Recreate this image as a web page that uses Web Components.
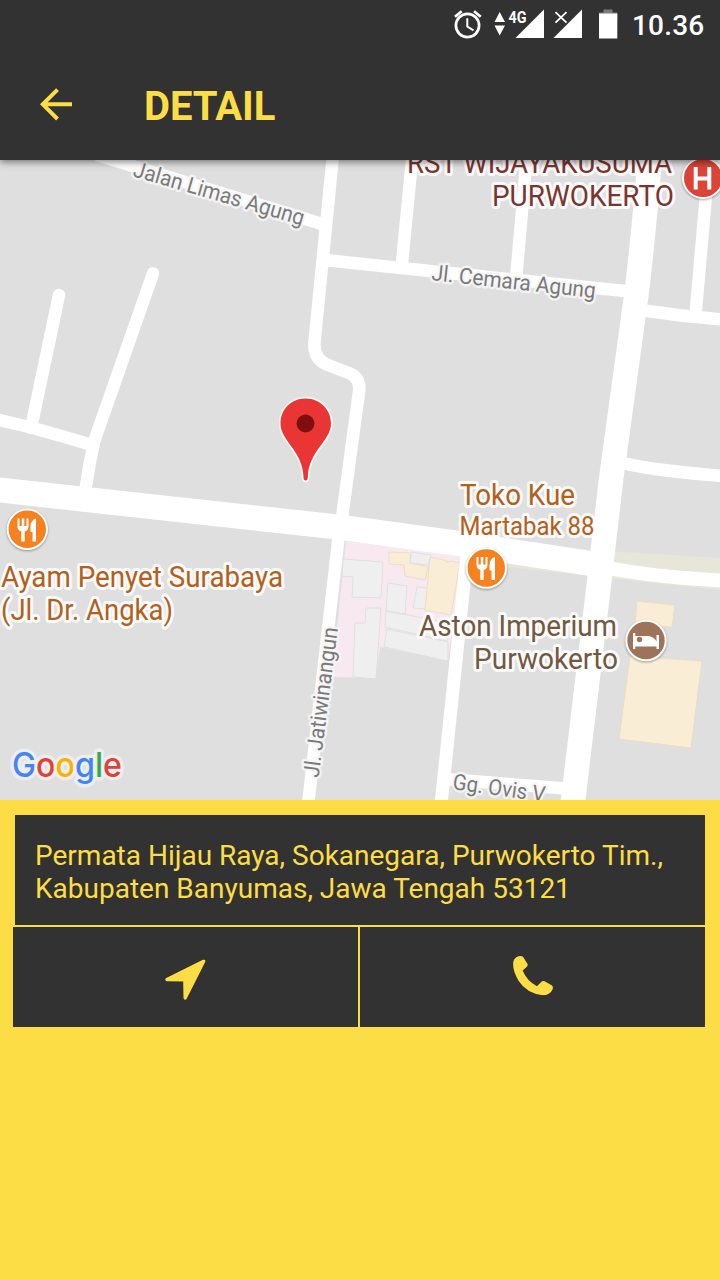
<!DOCTYPE html>
<html lang="id">
<head>
<meta charset="utf-8">
<title>Detail</title>
<style>
  html, body { margin: 0; height: 100%; background: #fddd46; font-family: Roboto, "Noto Sans", sans-serif; }
</style>
</head>
<body>
<detail-screen></detail-screen>

<template id="t-screen">
  <style>
    :host { display: flex; flex-direction: column; width: 720px; height: 1280px; overflow: hidden; background: #fddd46; }
    header { background: #323232; box-shadow: 0 2px 7px rgba(0,0,0,.5); position: relative; z-index: 1; }
    .panel { display: flex; flex-direction: column; gap: 2px; padding: 15px 15px 0 13px; }
    .actions { display: grid; grid-template-columns: 1fr 1fr; gap: 2px; height: 100px; }
  </style>
  <header>
    <status-bar>10.36</status-bar>
    <app-bar>DETAIL</app-bar>
  </header>
  <map-view></map-view>
  <section class="panel">
    <address-card>Permata Hijau Raya, Sokanegara, Purwokerto Tim., Kabupaten Banyumas, Jawa Tengah 53121</address-card>
    <div class="actions">
      <action-button label="Navigasi" style="--shift:4px">
        <svg width="41" height="41" viewBox="496 506 123 123"><path d="M612 513L502 567.500L555.500 568.500L556.500 623Z" fill="#fddd46" stroke="#fddd46" stroke-width="10" stroke-linejoin="round"/></svg>
      </action-button>
      <action-button label="Telepon" style="--shift:-3px">
        <svg width="41" height="40" viewBox="456 496 123 120"><path d="M469 501Q480 495 489 500L503 522Q504 527 498 532L488 541Q500 572 531 588L545 574Q549 571 554 573L576 586Q580 590 578 597Q570 615 548 615Q500 610 475 571Q456 538 460 514Q462 505 469 501Z" fill="#fddd46"/></svg>
      </action-button>
    </div>
  </section>
</template>

<template id="t-status">
  <style>
    :host { display: flex; height: 48px; justify-content: flex-end; align-items: center; padding-right: 16px; box-sizing: border-box; }
    svg { flex: none; }
    .time { width: 72px; color: #fff; font-weight: 500; font-size: 28px; line-height: 48px; letter-spacing: .2px; margin-left: 12px; white-space: nowrap; padding-top: 3px; }
  </style>
  <svg width="180" height="48" viewBox="440 0 180 48" fill="#fff">
    <g fill="none" stroke="#fff">
      <circle cx="467.5" cy="25.5" r="11.6" stroke-width="2.7"/>
      <path d="M467.3 18.3V26.5L473.5 30.3" stroke-width="2"/>
      <path d="M455 16.8L461.7 11.2M480.7 16.8L474 11.2" stroke-width="2.8"/>
    </g>
    <path d="M494.5 22L499.7 12L505 22ZM494.5 25.5H505L499.7 35.5Z"/>
    <text x="508.5" y="22.5" font-size="16.5" font-weight="700" textLength="18" lengthAdjust="spacingAndGlyphs">4G</text>
    <path d="M515.5 38L544 9.500V38ZM553.500 38L582 9.500V38Z"/>
    <path d="M555.500 12.200L566.500 22.700M566.500 12.200L555.500 22.700" stroke="#fff" stroke-width="1.800"/>
    <path d="M603.500 9.500H612.500V12.500H617.300V20H599V12.500H603.500Z" fill="#7c7c7c"/>
    <path d="M599 13.500H617.300V38.500H599Z"/>
  </svg>
  <span class="time"><slot></slot></span>
</template>

<template id="t-appbar">
  <style>
    :host { display: flex; height: 112px; align-items: center; padding-left: 40px; box-sizing: border-box; color: #fddd46; }
    h1 { margin: 4px 0 0 71px; padding-top: 1px; font-size: 40px; line-height: 48px; font-weight: 700; letter-spacing: -.1px; }
  </style>
  <svg width="33" height="33" viewBox="0 0 33 33" fill="none" stroke="#fddd46" stroke-width="4"><path d="M32 16.300H3M17.500 1.600L2.800 16.300L17.500 31"/></svg>
  <h1><slot></slot></h1>
</template>

<template id="t-address">
  <style>
    :host { display: block; box-sizing: border-box; height: 110px; margin-left: 2px; padding: 24px 20px; background: #323232; color: #fddd46; font-size: 28px; line-height: 33px; }
    p { margin: 0; }
  </style>
  <p><slot></slot></p>
</template>

<template id="t-action">
  <style>
    :host { display: flex; background: #323232; }
    button { all: unset; flex: 1; display: flex; align-items: center; justify-content: center; }
    ::slotted(svg) { display: block; transform: translateY(calc(var(--shift, 0px) / 2)); }
  </style>
  <button><slot></slot></button>
</template>

<template id="t-map">
  <style>
    :host { display: block; height: 640px; overflow: hidden; background: #dfdfdf; }
    svg { display: block; }
    .roads { fill: none; stroke: #fff; stroke-width: 12.500; }
    text { font-family: Roboto, sans-serif; paint-order: stroke; stroke-linejoin: round; stroke: #fff; stroke-opacity: .85; }
    .street { font-size: 22px; fill: #7a7a7a; stroke-width: 5px; stroke: #f6f6f6; }
    .poi { font-size: 29px; stroke-width: 6px; }
    .food { fill: #b3601a; stroke: #fdf1e4; }
    .hotel { fill: #735840; stroke: #f8f0e8; }
    .hospital { fill: #7b3530; stroke: #f8ecea; }
    .logo { font-family: Inter, sans-serif; font-size: 34.500px; font-weight: 500; stroke: #f0f0f0; stroke-width: 7px; }
    .grey { fill: #efefef; stroke: #dcdcdc; }
    .sand { fill: #f9edd6; stroke: #eadabd; }
    .badge { stroke: #fff; stroke-width: 2; filter: drop-shadow(0 1px 1px rgba(0,0,0,.35)); }
  </style>
  <svg width="720" height="640" viewBox="0 160 720 640">
    <defs>
      <g id="cutlery" fill="#fff">
        <path d="M-9.500 -10.500V-3Q-9.500 1.500 -5.700 2.500V12.500H-2.300V2.500Q1.500 1.500 1.500 -3V-10.500H-.5V-3H-2.700V-10.500H-5.200V-3H-7.500V-10.500Z"/>
        <path d="M9 -10.500Q3.500 -9 3.500 -2V3H5.500V12.500H9Z"/>
      </g>
    </defs>
    <path d="M500 538L592 550L720 558V590L600 577L500 566Z" fill="#e8e5d9"/>
    <path d="M346 541L462 556L448 661L380 647L376 678L332 677Z" fill="#f8e9f0"/>
    <g class="grey" stroke-width=".8">
      <path d="M343 559L383 562L381 598L352 597L353 577L342 576Z"/>
      <path d="M366 608L381 608L376 679L353 677L355 623L365 623Z"/>
      <path d="M388 583L407 586L405 614L386 611Z"/>
      <path d="M386 611L450 623L447 641L385 627Z"/>
      <path d="M387 629L448 642L448 661L384 647Z"/>
      <path d="M417 587L428 588L426 609L413 608Z"/>
    </g>
    <g class="sand" stroke-width=".8">
      <path d="M389 552L410 553L411 563L428 567L425 580L405 576L404 565L389 564Z"/>
      <path d="M430 557L444 560L447 562L451 561L460 563L451 615L425 610Z"/>
      <path d="M637 601L675 605L672 627L635 625Z"/>
      <path d="M630 656L702 661L691 748L619 739Z"/>
    </g>
    <path class="grey" stroke-width=".8" d="M411 552L431 555L428 565L410 563Z"/>
    <g class="roads">
      <path d="M97 155L322 224"/>
      <path d="M333 155L314.500 342Q313 359 328 365L350 373.500Q361 378.500 359 392L341 525"/>
      <path d="M340 525L308 805"/>
      <path d="M325 260L401 268L630 291.500M640 310Q680 316 722 319.500"/>
      <path d="M412.500 155L401.500 268M527 155L516 279M709.500 155L695.500 315"/>
      <path d="M620 462Q640 469 722 476"/>
      <path d="M59 295L31 428M153 273.500L96 436Q92 447 85 492" stroke-linecap="round"/>
      <path d="M-5 419L31 427.500Q62 436 92 445"/>
      <path d="M467.500 550L441 805" stroke-width="13"/>
      <path d="M445 779L572 789"/>
      <path d="M-5 489.500L342 527.500L470 545L600 565" stroke-width="25"/>
      <path d="M595 565Q640 576 722 580.500" stroke-width="14"/>
      <path d="M650 155Q646 210 637 290L611 480L600 575L572.500 805" stroke-width="24.500"/>
    </g>
    <text class="street" transform="translate(132 176) rotate(16.200)" textLength="177" lengthAdjust="spacingAndGlyphs">Jalan Limas Agung</text>
    <text class="street" transform="translate(431 280) rotate(6.300)" textLength="165" lengthAdjust="spacingAndGlyphs">Jl. Cemara Agung</text>
    <text class="street" transform="translate(318.500 778) rotate(-82.600)" textLength="151" lengthAdjust="spacingAndGlyphs">Jl. Jatiwinangun</text>
    <text class="street" transform="translate(452 789) rotate(8)" textLength="93" lengthAdjust="spacingAndGlyphs">Gg. Ovis V</text>
    <g class="poi hospital">
      <text x="407" y="173" textLength="265" lengthAdjust="spacingAndGlyphs">RST WIJAYAKUSUMA</text>
      <text x="492" y="206" textLength="182" lengthAdjust="spacingAndGlyphs">PURWOKERTO</text>
    </g>
    <g class="poi food">
      <text x="1" y="587" textLength="282" lengthAdjust="spacingAndGlyphs">Ayam Penyet Surabaya</text>
      <text x="1" y="620" textLength="172" lengthAdjust="spacingAndGlyphs">(Jl. Dr. Angka)</text>
      <text x="460" y="505" textLength="115" lengthAdjust="spacingAndGlyphs">Toko Kue</text>
      <text x="459.500" y="535" style="font-size:26px" textLength="135" lengthAdjust="spacingAndGlyphs">Martabak 88</text>
    </g>
    <g class="poi hotel">
      <text x="419" y="635.500" textLength="198" lengthAdjust="spacingAndGlyphs">Aston Imperium</text>
      <text x="474" y="669" textLength="144" lengthAdjust="spacingAndGlyphs">Purwokerto</text>
    </g>
    <circle class="badge" cx="703" cy="178" r="20" fill="#db4437"/>
    <path d="M695.700 167V189.500M709.300 167V189.500M695.700 178.500H709.300" stroke="#fff" stroke-width="4" fill="none"/>
    <circle class="badge" cx="27.300" cy="529.300" r="19.700" fill="#f5821f"/>
    <use href="#cutlery" x="27" y="529"/>
    <circle class="badge" cx="486.300" cy="568" r="19.700" fill="#f5821f"/>
    <use href="#cutlery" x="486" y="567.500"/>
    <circle class="badge" cx="646" cy="640.500" r="19.700" fill="#9f735a"/>
    <path d="M633 633H635.300V643.800H644V636H649Q655 637.500 656.500 641.500V635H659V649H656.500V646.500H635.300V649H633Z" fill="#fff"/>
    <rect x="635" y="636" width="9" height="8" fill="#fff"/>
    <circle cx="639.500" cy="639.500" r="2.700" fill="#9f735a"/>
    <path d="M305.500 398.500C291 398.500 280.500 409.500 280.500 423.500C280.500 441 303 451 303.500 477Q303.500 480.500 305.700 480.500Q307.800 480.500 307.800 477C308.500 451 331 441 331 423.500C331 409.500 320 398.500 305.500 398.500Z" fill="#ea3535" stroke="#fffaf5" stroke-width="3.500" paint-order="stroke"/>
    <circle cx="305.500" cy="423.500" r="9" fill="#7f0f0f"/>
    <text class="logo" x="12" y="776.500" textLength="110" lengthAdjust="spacingAndGlyphs"><tspan fill="#4285f4">G</tspan><tspan fill="#db4437">o</tspan><tspan fill="#f4b400">o</tspan><tspan fill="#4285f4">g</tspan><tspan fill="#34a853">l</tspan><tspan fill="#db4437">e</tspan></text>
  </svg>
</template>

<script>
  class TemplateElement extends HTMLElement {
    constructor() {
      super();
      const source = document.getElementById(this.constructor.template);
      this.attachShadow({ mode: "open" }).append(source.content.cloneNode(true));
    }
  }
  class StatusBar extends TemplateElement { static template = "t-status"; }
  class AppBar extends TemplateElement { static template = "t-appbar"; }
  class MapView extends TemplateElement { static template = "t-map"; }
  class AddressCard extends TemplateElement { static template = "t-address"; }
  class ActionButton extends TemplateElement {
    static template = "t-action";
    connectedCallback() {
      this.shadowRoot.querySelector("button").setAttribute("aria-label", this.getAttribute("label") || "");
    }
  }
  class DetailScreen extends TemplateElement { static template = "t-screen"; }
  customElements.define("status-bar", StatusBar);
  customElements.define("app-bar", AppBar);
  customElements.define("map-view", MapView);
  customElements.define("address-card", AddressCard);
  customElements.define("action-button", ActionButton);
  customElements.define("detail-screen", DetailScreen);
</script>
</body>
</html>
